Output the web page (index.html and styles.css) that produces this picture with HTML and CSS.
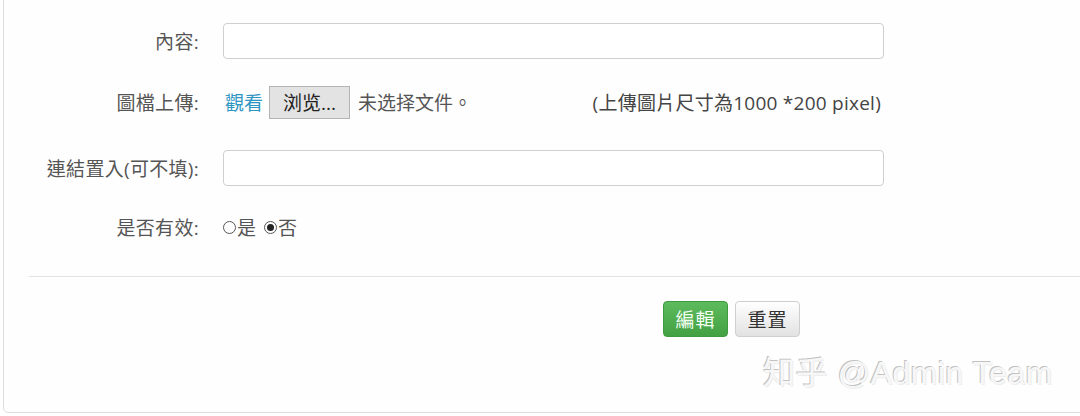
FILE: index.html
```html
<!DOCTYPE html>
<html lang="zh-Hant">
<head>
<meta charset="utf-8">
<title>編輯</title>
<link rel="stylesheet" href="styles.css">
</head>
<body>
<div class="panel">
  <form class="form">
    <div class="row row-1">
      <label class="label">內容:</label>
      <div class="field"><input class="input" type="text"></div>
    </div>
    <div class="row row-2">
      <label class="label">圖檔上傳:</label>
      <div class="field upload">
        <a class="link" href="#">觀看</a>
        <span class="file-btn">浏览...</span>
        <span class="file-none">未选择文件。</span>
        <span class="hint">(上傳圖片尺寸為1000 *200 pixel)</span>
      </div>
    </div>
    <div class="row row-3">
      <label class="label">連結置入(可不填):</label>
      <div class="field"><input class="input" type="text"></div>
    </div>
    <div class="row row-4">
      <label class="label">是否有效:</label>
      <div class="field radios">
        <span class="radio"></span><span class="radio-text">是</span>
        <span class="radio checked"></span><span class="radio-text">否</span>
      </div>
    </div>
    <div class="actions">
      <span class="btn btn-success">編輯</span>
      <span class="btn btn-default">重置</span>
    </div>
  </form>
  <div class="watermark">知乎 @Admin Team</div>
</div>
</body>
</html>
```

FILE: styles.css
```css
html, body {
  margin: 0;
  padding: 0;
  background: #ffffff;
  overflow: hidden;
}

body {
  width: 1080px;
  height: 416px;
  font-family: "Open Sans", "Noto Sans CJK TC", sans-serif;
  font-size: 19px;
  color: #555;
}

.panel {
  position: relative;
  box-sizing: border-box;
  margin: -5px 0 0 3px;
  width: 1100px;
  height: 418px;
  border: 1px solid #dcdcdc;
  border-radius: 5px;
  background: #fefefe;
  padding: 27px 0 0 24px;
}

.row {
  display: grid;
  grid-template-columns: 171px 661px;
  column-gap: 24px;
  align-items: center;
  height: 36px;
}

.row-2 { margin-top: 25px; }
.row-3 { margin-top: 30px; }
.row-4 { margin-top: 23px; }

.label {
  text-align: right;
  color: #555;
  letter-spacing: 0.3px;
  white-space: nowrap;
}

.field {
  display: flex;
  align-items: center;
  height: 36px;
}

.input {
  box-sizing: border-box;
  width: 661px;
  height: 36px;
  border: 1px solid #cfcfcf;
  border-radius: 4px;
  background: #fff;
  margin: 0;
  padding: 0 10px;
  font: inherit;
}

.upload {
  position: relative;
}

.link {
  color: #2f95c2;
  text-decoration: none;
  margin-left: 2px;
}

.file-btn {
  box-sizing: border-box;
  height: 33px;
  width: 81px;
  margin-left: 6px;
  border: 1px solid #b4b4b4;
  background: #e3e3e3;
  color: #222;
  display: inline-flex;
  align-items: center;
  justify-content: center;
}

.file-none {
  margin-left: 8px;
  color: #555;
}

.hint {
  margin-left: auto;
  margin-right: 3px;
  color: #444;
  letter-spacing: 0.25px;
}

.radio {
  box-sizing: border-box;
  flex: none;
  width: 13px;
  height: 13px;
  border: 1px solid #555;
  border-radius: 50%;
  display: inline-flex;
  align-items: center;
  justify-content: center;
  margin-top: 1px;
}

.radio.checked {
  margin-left: 8px;
}

.radio.checked::after {
  content: "";
  width: 7px;
  height: 7px;
  border-radius: 50%;
  background: #222;
}

.radio-text {
  margin-left: 1px;
  color: #555;
}

.actions {
  margin: 31px 0 0 1px;
  border-top: 1px solid #e3e3e3;
  padding: 24px 0 0 634px;
  display: flex;
  gap: 7px;
}

.btn {
  box-sizing: border-box;
  height: 36px;
  width: 65px;
  border-radius: 4px;
  display: inline-flex;
  align-items: center;
  justify-content: center;
  letter-spacing: 1px;
}

.btn-success {
  background: linear-gradient(#5dbb5d, #43a143);
  border: 1px solid #3e9a3e;
  color: #f4fff4;
}

.btn-default {
  background: linear-gradient(#ffffff, #e2e2e2);
  border: 1px solid #cfcfcf;
  color: #333;
}

.watermark {
  position: absolute;
  left: 759px;
  top: 351px;
  font-family: "Liberation Sans", "Noto Sans CJK SC", sans-serif;
  font-size: 32px;
  color: #f7f7f7;
  letter-spacing: 0.5px;
  text-shadow: -1px -1px 0 #c2c2c2, 1px 1px 0 #eeeeee;
  white-space: nowrap;
}
```
